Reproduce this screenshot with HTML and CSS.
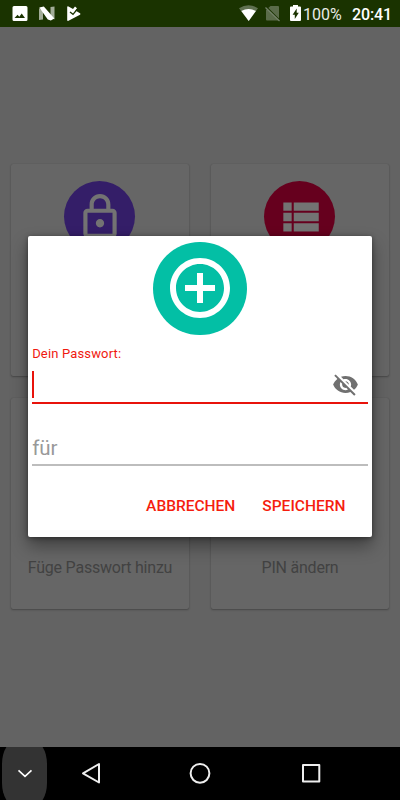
FILE: index.html
```html
<!DOCTYPE html>
<html lang="de">
<head>
<meta charset="utf-8">
<title>Passwörter</title>
<link rel="stylesheet" href="styles.css">
</head>
<body>
<div class="screen">
  <header class="status">
    <svg class="notifications" width="90" height="26" viewBox="0 0 90 26">
      <path fill="#fff" fill-rule="evenodd" d="M14 6h12q1.500 0 1.500 1.500v12q0 1.500-1.500 1.500H14q-1.500 0-1.500-1.500v-12Q12.500 6 14 6zM14.500 18h10.500l-3.300-4.400-2.400 3.100-1.700-2z"/>
      <path fill="#a3ad99" d="M39 8l4 3v8.500l-4 .5zM50.500 7l4-.5v13l-4-3z"/>
      <path fill="#fff" d="M39.300 7.500l4.500-1L54.300 18.500l-3.500 2-3-1z"/>
      <path fill="#fff" d="M67.200 6.800q.3-.8 1.300-.3l4.500 2.600 2-2.600 2 1.800-1.600 2.300 4.600 2.700q1 .7 0 1.500l-11.500 6q-1.300.5-1.300-.9z"/>
      <path fill="none" stroke="#1a3300" stroke-width="1.300" d="M70 12l3 2.300 4-4.800"/>
    </svg>
    <div class="indicators">
      <svg width="73" height="26" viewBox="0 0 73 26">
        <path fill="#5f7050" d="M9 8.300Q18.500 2 28 8.300L18.700 21z"/>
        <path fill="#fff" d="M11.300 11q7.200-4.200 14.600 0L18.700 21z"/>
        <path fill="#5a6b49" d="M40.500 6H48q1 0 1 1v12q0 1.500-1 1.500H37q-1 0-1-1V10z"/>
        <path fill="none" stroke="#1a3300" stroke-width="1.200" d="M36.500 7l13.500 13.500"/>
        <path fill="none" stroke="#74826a" stroke-width="1.200" d="M35.500 7.500l14 13.500"/>
        <path fill="#fff" d="M63 5h5v1.600h2q1 0 1 1V20q0 1-1 1h-9q-1 0-1-1V7.600q0-1 1-1h2z"/>
        <path fill="#1a3300" d="M66.700 8.500v4.200h2.100l-4 6.300v-4.200h-2.200z"/>
      </svg>
      <span class="percent">100%</span><span class="time">20:41</span>
    </div>
  </header>
  <main class="menu">
    <section class="card">
      <span class="badge violet"><svg width="50" height="50" viewBox="0 0 24 24"><path d="M18 8h-1V6c0-2.760-2.240-5-5-5S7 3.240 7 6v2H6c-1.100 0-2 .9-2 2v10c0 1.100.9 2 2 2h12c1.100 0 2-.9 2-2V10c0-1.100-.9-2-2-2zM9 6c0-1.660 1.340-3 3-3s3 1.340 3 3v2H9V6zm9 14H6V10h12v10zm-6-3c1.100 0 2-.9 2-2s-.9-2-2-2-2 .9-2 2 .9 2 2 2z"/></svg></span>
    </section>
    <section class="card">
      <span class="badge crimson"><svg width="50" height="50" viewBox="0 0 24 24"><path d="M4 14h4v-4H4v4zm0 5h4v-4H4v4zM4 9h4V5H4v4zm5 5h12v-4H9v4zm0 5h12v-4H9v4zM9 5v4h12V5H9z"/></svg></span>
    </section>
    <section class="card low"><span class="label">Füge Passwort hinzu</span></section>
    <section class="card low"><span class="label">PIN ändern</span></section>
  </main>
  <nav class="navbar">
    <span class="collapse"><svg width="16" height="10" viewBox="0 0 16 10"><path d="M1.500 1.300L8 7.300l6.500-6"/></svg></span>
    <svg class="keys" width="353" height="53" viewBox="47 747 353 53">
      <path d="M99 764v18.500l-16-9.200z"/><circle cx="200" cy="773.300" r="9.400"/><rect x="303" y="765" width="16.300" height="16.600"/>
    </svg>
  </nav>
  <div class="dialog" role="dialog">
    <span class="hero"><svg width="72" height="72" viewBox="0 0 24 24"><path d="M13 7h-2v4H7v2h4v4h2v-4h4v-2h-4V7zm-1-5C6.480 2 2 6.480 2 12s4.480 10 10 10 10-4.480 10-10S17.520 2 12 2zm0 18c-4.410 0-8-3.590-8-8s3.590-8 8-8 8 3.590 8 8-3.590 8-8 8z"/></svg></span>
    <div class="caption">Dein Passwort:</div>
    <div class="field active">
      <span class="caret"></span>
      <svg width="27" height="27" viewBox="0 0 24 24"><path d="M12 7c2.760 0 5 2.240 5 5 0 .65-.13 1.260-.36 1.830l2.920 2.920c1.510-1.260 2.700-2.890 3.430-4.750-1.730-4.390-6-7.500-11-7.500-1.400 0-2.740.25-3.980.7l2.160 2.160C10.740 7.130 11.350 7 12 7zM2 4.270l2.280 2.280.46.46C3.080 8.300 1.780 10.020 1 12c1.730 4.390 6 7.500 11 7.500 1.550 0 3.030-.3 4.380-.84l.42.42L19.730 22 21 20.730 3.270 3 2 4.270zM7.530 9.800l1.550 1.550c-.05.21-.08.43-.08.65 0 1.660 1.340 3 3 3 .22 0 .44-.03.65-.08l1.550 1.550c-.67.33-1.410.53-2.200.53-2.760 0-5-2.240-5-5 0-.79.2-1.530.53-2.200zm4.310-.78l3.150 3.150.02-.16c0-1.660-1.340-3-3-3l-.17.01z"/></svg>
    </div>
    <div class="field second">für</div>
    <div class="actions"><span class="action cancel">ABBRECHEN</span><span class="action save">SPEICHERN</span></div>
  </div>
</div>
</body>
</html>
```
FILE: styles.css
```css
* { box-sizing: border-box; }
body { margin: 0; font-family: Roboto, "Noto Sans", sans-serif; }
svg { display: block; flex: none; }
.screen { position: relative; width: 400px; height: 800px; background: #636363; overflow: hidden; display: flex; flex-direction: column; }
.status { height: 26.500px; flex: none; background: #1a3300; color: #fff; display: flex; justify-content: space-between; padding-right: 9px; }
.indicators { display: flex; font-size: 16px; line-height: 29px; white-space: nowrap; }
.percent { width: 49px; color: #e8ebe6; }
.time { font-weight: 500; width: 39px; letter-spacing: -.1px; }
.menu { flex: 1; display: grid; grid-template-columns: 178px 178px; grid-template-rows: 211.500px 211.500px; gap: 22px; padding: 137.500px 11px 0; }
.card { background: #666; border-radius: 2px; box-shadow: 0 1px 2px rgba(0,0,0,.28), 0 0 1px rgba(0,0,0,.18); display: flex; justify-content: center; align-items: flex-start; padding-top: 17px; }
.badge { width: 71px; height: 71px; border-radius: 50%; display: flex; align-items: center; justify-content: center; fill: #737373; position: relative; left: -.3px; }
.violet { background: #341e68; }
.crimson { background: #66001e; }
.low { align-items: flex-end; padding-bottom: 30px; }
.label { font-size: 16px; line-height: 22px; color: #424242; letter-spacing: -.22px; }
.navbar { height: 53px; flex: none; background: #000; display: flex; overflow: hidden; }
.collapse { width: 45px; height: 67px; margin: -7px 0 0 2px; background: #333; border-radius: 15px / 24px; display: flex; align-items: center; justify-content: center; flex: none; }
.collapse path { fill: none; stroke: #fff; stroke-width: 1.600; }
.keys { fill: none; stroke: #eee; stroke-width: 2; stroke-linejoin: round; }
.dialog { position: absolute; left: 27.600px; top: 236px; width: 344.800px; height: 300.700px; padding: 5.500px 4.600px 0; background: #fff; border-radius: 2px; box-shadow: 0 9px 17px rgba(0,0,0,.38), 0 1px 5px rgba(0,0,0,.4); display: flex; flex-direction: column; }
.hero { align-self: center; flex: none; width: 93.500px; height: 93.500px; border-radius: 50%; background: #03bfa5; fill: #fff; display: flex; align-items: center; justify-content: center; }
.caption { margin-top: 11px; height: 15px; line-height: 15px; font-size: 13px; letter-spacing: .15px; color: #f0190f; }
.field { flex: none; display: flex; justify-content: space-between; border-bottom: 2px solid #bdbdbd; }
.active { height: 43px; border-color: #e8130b; padding: 9.500px 9px 0 0; }
.active svg { fill: #707070; }
.caret { width: 2px; height: 27px; background: #e8130b; }
.second { height: 62px; padding-top: 32px; font-size: 20.500px; line-height: 24px; color: #999; }
.actions { display: flex; justify-content: flex-end; gap: 27px; padding: 30px 22.400px 0 0; font-size: 15.500px; line-height: 21px; font-weight: 500; color: #f51d0e; }
```
